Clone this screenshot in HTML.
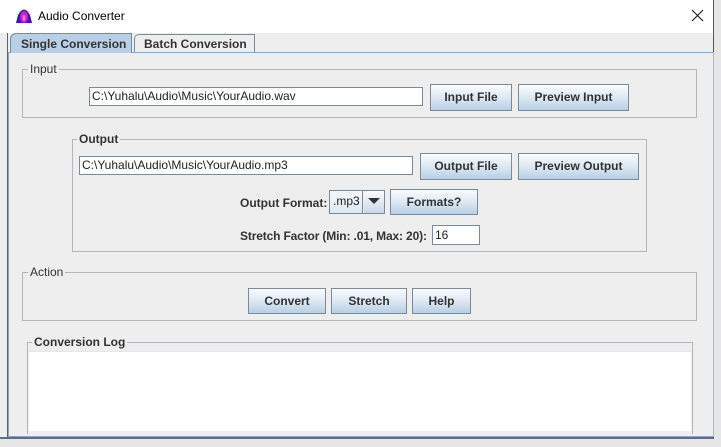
<!DOCTYPE html>
<html><head><meta charset="utf-8"><style>
*{box-sizing:border-box;margin:0;padding:0}
body{width:721px;height:447px;background:#e6e6e6;position:relative;overflow:hidden;font-family:"Liberation Sans",Arial,sans-serif;font-size:12px;color:#333}
.a{position:absolute}
.win{left:0;top:0;width:714px;height:439px;background:#eeeeee;border-right:1px solid #555;border-bottom:2px solid #607080}
.title{left:0;top:0;width:713px;height:33px;background:#fff}
.b{font-weight:bold;color:#333}
.btn{position:absolute;border:1px solid #7a8a99;background:linear-gradient(#fafcfe,#dde8f3 50%,#b8cfe5);font-weight:bold;color:#333;text-align:center;font-size:12px}
.tf{position:absolute;background:#fff;border:1px solid #7a8a99;padding-left:2px;font-size:12px;color:#222}
.grp{position:absolute;border:1px solid #aeb6bf}
.gt{position:absolute;background:#eeeeee;padding:0 2px;top:-8px;line-height:14px}
</style></head><body>
<div class="a win"></div>
<div class="a title"></div>
<svg class="a" style="left:15px;top:8px" width="18" height="16" viewBox="0 0 18 16"><path d="M1 15 L3 7 Q9 -4 15 7 L17 15 Z" fill="#3a1aa8"/><ellipse cx="9" cy="9" rx="4" ry="6" fill="#d020c0"/><ellipse cx="9" cy="10" rx="1.6" ry="3" fill="#ff70e0"/></svg>
<div class="a" style="left:38px;top:9px;font-size:12px;color:#000">Audio Converter</div>
<svg class="a" style="left:691px;top:9px" width="13" height="13"><path d="M1 1L12 12M12 1L1 12" stroke="#222" stroke-width="1.2"/></svg>
<div class="a" style="left:7px;top:33px;width:1px;height:406px;background:#5a6570"></div>
<div class="a" style="left:8px;top:52px;width:706px;height:385px;border:1px solid #8ea6bd;border-right-color:#aabbcc"></div>
<div class="a" style="left:10px;top:33px;width:122px;height:20px;background:#b8cfe5;border:1px solid #7a8a99;border-bottom:none;border-top-left-radius:6px;font-weight:bold;color:#333;padding:3px 0 0 10px">Single Conversion</div>
<div class="a" style="left:134px;top:34px;width:121px;height:18px;background:#eeeeee;border:1px solid #7a8a99;border-bottom:none;border-top-left-radius:5px;font-weight:bold;color:#333;padding:2px 0 0 9px">Batch Conversion</div>
<div class="grp" style="left:22px;top:69px;width:675px;height:49px"><div class="gt" style="left:5px;color:#333">Input</div></div>
<div class="tf" style="left:89px;top:87px;width:334px;height:19px;line-height:17px">C:\Yuhalu\Audio\Music\YourAudio.wav</div>
<div class="btn" style="left:430px;top:84px;width:82px;height:27px;line-height:25px">Input File</div>
<div class="btn" style="left:518px;top:84px;width:111px;height:27px;line-height:25px">Preview Input</div>
<div class="grp" style="left:72px;top:139px;width:575px;height:113px"><div class="gt b" style="left:4px">Output</div></div>
<div class="tf" style="left:79px;top:156px;width:334px;height:19px;line-height:17px">C:\Yuhalu\Audio\Music\YourAudio.mp3</div>
<div class="btn" style="left:420px;top:153px;width:92px;height:27px;line-height:25px">Output File</div>
<div class="btn" style="left:518px;top:153px;width:121px;height:27px;line-height:25px">Preview Output</div>
<div class="a b" style="left:240px;top:196px">Output Format:</div>
<div class="a" style="left:329px;top:190px;width:56px;height:24px;border:1px solid #7a8a99;background:#eeeeee"></div>
<div class="a" style="left:330px;top:191px;width:33px;height:22px;background:linear-gradient(#f4f8fb,#dde8f3);border-right:1px solid #7a8a99;padding:3px 0 0 3px;color:#222">.mp3</div>
<div class="a" style="left:364px;top:191px;width:20px;height:22px;background:linear-gradient(#fafcfe,#c8d8e8)"></div>
<svg class="a" style="left:368px;top:198px" width="12" height="7"><path d="M0 0H12L6 6Z" fill="#333"/></svg>
<div class="btn" style="left:390px;top:189px;width:88px;height:26px;line-height:24px">Formats?</div>
<div class="a b" style="left:240px;top:229px;letter-spacing:-0.15px">Stretch Factor (Min: .01, Max: 20):</div>
<div class="tf" style="left:432px;top:225px;width:48px;height:20px;line-height:18px">16</div>
<div class="grp" style="left:22px;top:272px;width:675px;height:49px"><div class="gt" style="left:5px;color:#333">Action</div></div>
<div class="btn" style="left:248px;top:288px;width:78px;height:26px;line-height:24px">Convert</div>
<div class="btn" style="left:331px;top:288px;width:76px;height:26px;line-height:24px">Stretch</div>
<div class="btn" style="left:412px;top:288px;width:59px;height:26px;line-height:24px">Help</div>
<div class="grp" style="left:27px;top:342px;width:666px;height:92px;border-bottom:none"><div class="gt b" style="left:4px">Conversion Log</div></div>
<div class="a" style="left:29px;top:351px;width:662px;height:80px;background:#fff;border-top:1px solid #e4e8ec"></div>
</body></html>
